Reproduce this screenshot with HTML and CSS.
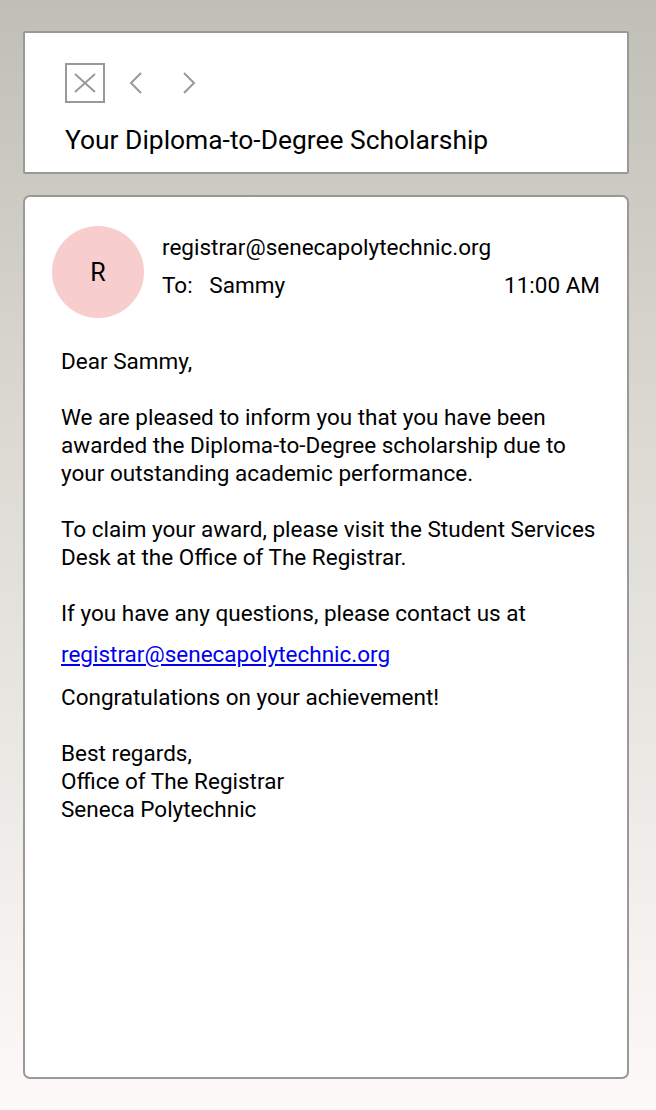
FILE: index.html
```html
<!DOCTYPE html>
<html>
<head>
<meta charset="utf-8">
<link rel="stylesheet" href="styles.css">
</head>
<body>
<div class="page">
  <header class="top-card">
    <div class="toolbar">
      <span class="close-btn">
        <svg width="22" height="20" viewBox="0 0 22 20"><path d="M1 1 L21 19 M21 1 L1 19" stroke="#999" stroke-width="2" fill="none"/></svg>
      </span>
      <span class="nav-btn nav-prev">
        <svg width="13" height="22" viewBox="0 0 13 22"><path d="M12 1 L2 11 L12 21" stroke="#999" stroke-width="2" fill="none"/></svg>
      </span>
      <span class="nav-btn nav-next">
        <svg width="13" height="22" viewBox="0 0 13 22"><path d="M1 1 L11 11 L1 21" stroke="#999" stroke-width="2" fill="none"/></svg>
      </span>
    </div>
    <h1 class="subject">Your Diploma-to-Degree Scholarship</h1>
  </header>
  <main class="mail-card">
    <div class="mail-head">
      <div class="avatar">R</div>
      <div class="meta">
        <div class="from">registrar@senecapolytechnic.org</div>
        <div class="to-row">
          <span class="to">To:&nbsp;&nbsp; Sammy</span>
          <span class="time">11:00 AM</span>
        </div>
      </div>
    </div>
    <div class="mail-body">
      <p>Dear Sammy,</p>
      <p>We are pleased to inform you that you have been awarded the Diploma-to-Degree scholarship due to your outstanding academic performance.</p>
      <p>To claim your award, please visit the Student Services Desk at the Office of The Registrar.</p>
      <p class="tight">If you have any questions, please contact us at</p>
      <p class="link-line"><a href="#">registrar@senecapolytechnic.org</a></p>
      <p>Congratulations on your achievement!</p>
      <p>Best regards,<br>Office of The Registrar<br>Seneca Polytechnic</p>
    </div>
  </main>
</div>
</body>
</html>
```
FILE: styles.css
```css
* { box-sizing: border-box; }
html, body { margin: 0; padding: 0; }
body {
  width: 656px;
  height: 1110px;
  background: linear-gradient(to bottom, #c0bfb5 0%, #dcdad3 40%, #fcf9f8 100%);
  font-family: Roboto, "Liberation Sans", sans-serif;
  color: #000;
}
.page {
  padding: 31px 27px 0 23px;
  display: flex;
  flex-direction: column;
  gap: 21px;
}
.top-card {
  background: #fff;
  border: 2px solid #999;
  border-radius: 2px;
  height: 143px;
  padding: 30px 0 0 40px;
}
.toolbar {
  display: flex;
  align-items: center;
  height: 40px;
}
.close-btn {
  width: 40px;
  height: 40px;
  border: 2px solid #999;
  display: flex;
  align-items: center;
  justify-content: center;
}
.nav-btn {
  display: flex;
  align-items: center;
}
.nav-prev { margin-left: 24px; }
.nav-next { margin-left: 41px; }
.subject {
  margin: 21px 0 0 0;
  font-size: 26.4px;
  font-weight: 400;
  line-height: 32px;
}
.mail-card {
  background: #fff;
  border: 2px solid #999;
  border-radius: 7px;
  height: 884px;
  padding: 29px 27px 0 27px;
}
.mail-head {
  display: flex;
  gap: 18px;
}
.avatar {
  width: 92px;
  height: 92px;
  border-radius: 50%;
  background: #f7cdcd;
  display: flex;
  align-items: center;
  justify-content: center;
  font-size: 25px;
  flex-shrink: 0;
}
.meta {
  flex: 1;
  font-size: 22.5px;
  line-height: 38px;
  padding-top: 2px;
}
.to-row {
  display: flex;
  justify-content: space-between;
}
.mail-body {
  padding: 29px 0 0 9px;
  font-size: 22.5px;
  line-height: 28px;
}
.mail-body p { margin: 0 0 28px 0; }
.mail-body p.tight { margin-bottom: 13px; }
.mail-body p.link-line { margin-bottom: 15px; }
.mail-body a { color: #0000ee; text-decoration: underline; }
```
